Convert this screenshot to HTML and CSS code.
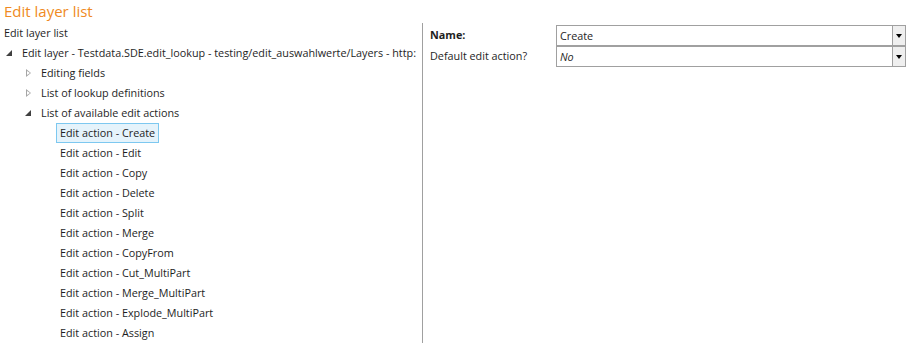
FILE: index.html
```html
<!DOCTYPE html>
<html lang="en">
<head>
    <meta charset="UTF-8">
    <title>Edit layer list</title>
    <link rel="stylesheet" href="styles.css">
</head>
<body>
    <h1 class="page-title">Edit layer list</h1>

    <div class="editor">
        <div class="tree-panel">
            <div class="panel-label">Edit layer list</div>
            <div class="tree-row level-0">
                <span class="toggle open"></span>
                <span class="node">Edit layer - Testdata.SDE.edit_lookup - testing/edit_auswahlwerte/Layers - http:</span>
            </div>
            <div class="tree-row level-1">
                <span class="toggle closed"></span>
                <span class="node">Editing fields</span>
            </div>
            <div class="tree-row level-1">
                <span class="toggle closed"></span>
                <span class="node">List of lookup definitions</span>
            </div>
            <div class="tree-row level-1">
                <span class="toggle open"></span>
                <span class="node">List of available edit actions</span>
            </div>
            <div class="tree-row level-2"><span class="node selected">Edit action - Create</span></div>
            <div class="tree-row level-2"><span class="node">Edit action - Edit</span></div>
            <div class="tree-row level-2"><span class="node">Edit action - Copy</span></div>
            <div class="tree-row level-2"><span class="node">Edit action - Delete</span></div>
            <div class="tree-row level-2"><span class="node">Edit action - Split</span></div>
            <div class="tree-row level-2"><span class="node">Edit action - Merge</span></div>
            <div class="tree-row level-2"><span class="node">Edit action - CopyFrom</span></div>
            <div class="tree-row level-2"><span class="node">Edit action - Cut_MultiPart</span></div>
            <div class="tree-row level-2"><span class="node">Edit action - Merge_MultiPart</span></div>
            <div class="tree-row level-2"><span class="node">Edit action - Explode_MultiPart</span></div>
            <div class="tree-row level-2"><span class="node">Edit action - Assign</span></div>
        </div>

        <div class="props-panel">
            <div class="prop-row">
                <label class="prop-label bold">Name:</label>
                <div class="combo">
                    <span class="combo-value">Create</span>
                    <span class="combo-btn"></span>
                </div>
            </div>
            <div class="prop-row">
                <label class="prop-label">Default edit action?</label>
                <div class="combo">
                    <span class="combo-value italic">No</span>
                    <span class="combo-btn"></span>
                </div>
            </div>
        </div>
    </div>
</body>
</html>
```

FILE: styles.css
```css
body {
    margin: 0;
    font-family: "Open Sans", "Noto Sans", sans-serif;
    font-size: 10.8px;
    color: #1e1e1e;
    background: #fff;
    overflow: hidden;
}

.page-title {
    margin: 0;
    padding: 1px 0 0 4px;
    height: 23px;
    box-sizing: border-box;
    font-size: 15px;
    line-height: 20px;
    font-weight: normal;
    color: #ef8a23;
}

.editor {
    display: flex;
}

.tree-panel {
    width: 422px;
    flex-shrink: 0;
    overflow: hidden;
    white-space: nowrap;
}

.panel-label {
    height: 20px;
    line-height: 20px;
    padding-left: 4px;
}

.tree-row {
    display: flex;
    align-items: center;
    height: 20px;
}

.level-0 { padding-left: 4px; }
.level-1 { padding-left: 23px; }
.level-2 { padding-left: 56px; }

.toggle {
    width: 14px;
    height: 20px;
    flex-shrink: 0;
    position: relative;
}

.toggle.closed::before {
    content: "";
    position: absolute;
    left: 3px;
    top: 6px;
    border-left: 5px solid #a6a6a6;
    border-top: 4px solid transparent;
    border-bottom: 4px solid transparent;
}

.toggle.closed::after {
    content: "";
    position: absolute;
    left: 4px;
    top: 8px;
    border-left: 3px solid #fff;
    border-top: 2px solid transparent;
    border-bottom: 2px solid transparent;
}

.toggle.open::before {
    content: "";
    position: absolute;
    left: 2px;
    top: 7px;
    border-right: 6px solid #404040;
    border-top: 6px solid transparent;
}

.node {
    padding: 0 3px;
    line-height: 18px;
    border: 1px solid transparent;
}

.node.selected {
    background: #e5f3fb;
    border-color: #7dc8f0;
}

.props-panel {
    flex: 1;
    border-left: 1px solid #a0a0a0;
    height: 320px;
    padding: 1px 7px 0 7px;
}

.prop-row {
    display: flex;
    align-items: center;
    height: 21px;
}

.prop-label {
    width: 126px;
    flex-shrink: 0;
}

.bold {
    font-weight: bold;
}

.combo {
    flex: 1;
    height: 21px;
    box-sizing: border-box;
    border: 1px solid #a0a0a0;
    display: flex;
    align-items: center;
    margin-bottom: -1px;
}

.combo-value {
    flex: 1;
    padding-left: 3px;
}

.italic {
    font-style: italic;
}

.combo-btn {
    width: 12px;
    height: 19px;
    border-left: 1px solid #a0a0a0;
    background: #efefef;
    position: relative;
}

.combo-btn::after {
    content: "";
    position: absolute;
    left: 3px;
    top: 8px;
    border-top: 4px solid #000;
    border-left: 3.5px solid transparent;
    border-right: 3.5px solid transparent;
}
```
